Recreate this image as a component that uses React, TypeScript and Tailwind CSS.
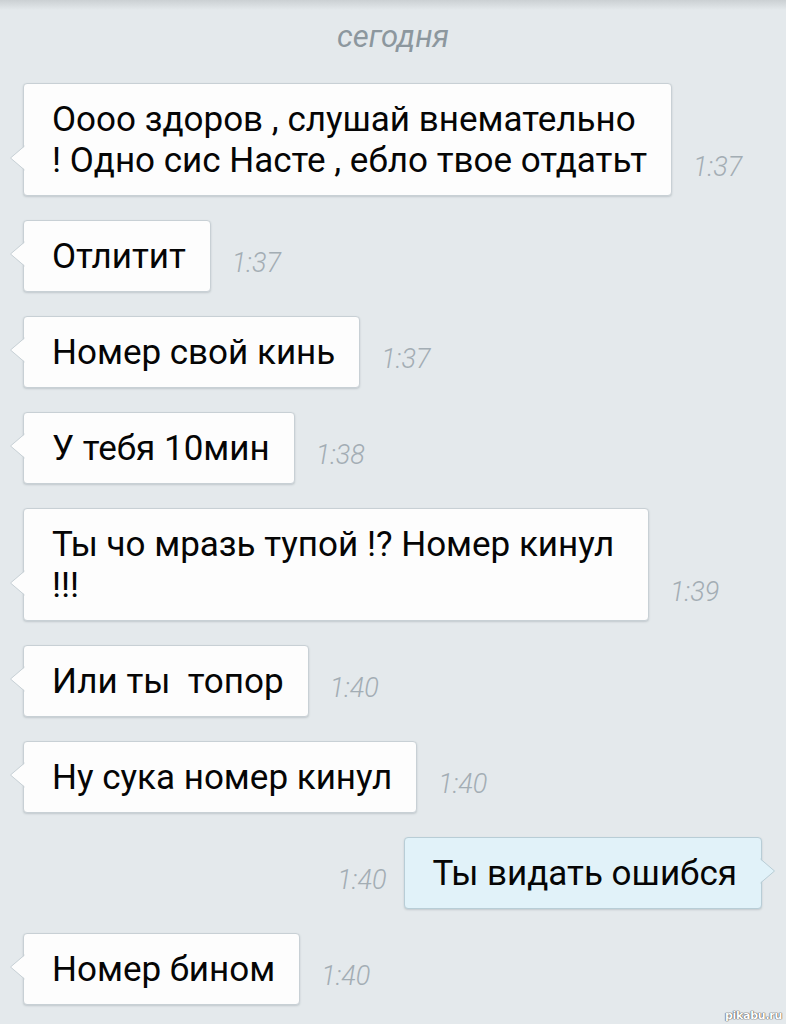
type Message = {
  text: string;
  time: string;
  out?: boolean;
  width?: string;
};

const messages: Message[] = [
  { text: "Оооо здоров , слушай внемательно\n! Одно сис Насте , ебло твое отдатьт", time: "1:37" },
  { text: "Отлитит", time: "1:37" },
  { text: "Номер свой кинь", time: "1:37" },
  { text: "У тебя 10мин", time: "1:38" },
  { text: "Ты чо мразь тупой !? Номер кинул\n!!!", time: "1:39", width: "w-[626px]" },
  { text: "Или ты  топор", time: "1:40" },
  { text: "Ну сука номер кинул", time: "1:40" },
  { text: "Ты видать ошибся", time: "1:40", out: true },
  { text: "Номер бином", time: "1:40" },
];

function Tail({ out }: { out?: boolean }) {
  if (out) {
    return (
      <svg
        className="absolute right-[-15px] bottom-[24px]"
        width="16"
        height="26"
        viewBox="0 0 16 26"
      >
        <polygon points="0,1 14.5,13 0,25" fill="#e1f2f9" />
        <polyline points="0.5,1 14.5,13 0.5,25" fill="none" stroke="#b8cdd6" strokeWidth="1" strokeLinejoin="round" />
      </svg>
    );
  }
  return (
    <svg
      className="absolute left-[-15px] bottom-[24px]"
      width="16"
      height="26"
      viewBox="0 0 16 26"
    >
      <polygon points="16,1 1.5,13 16,25" fill="#fdfdfd" />
      <polyline points="15.5,1 1.5,13 15.5,25" fill="none" stroke="#c8d0d5" strokeWidth="1" strokeLinejoin="round" />
    </svg>
  );
}

function Time({ value }: { value: string }) {
  return (
    <span className="mb-[15px] shrink-0 text-[27px] leading-none font-light italic text-[#a3adb4]">
      {value}
    </span>
  );
}

function Bubble({ msg }: { msg: Message }) {
  return (
    <div
      className={`relative rounded-[4px] border pt-[15px] pb-[14px] pl-[28px] pr-[24px] text-[35px] leading-[41px] whitespace-pre-wrap text-[#050505] shadow-[0_1px_2px_rgba(90,105,115,0.25)] ${
        msg.out ? "border-[#b8cdd6] bg-[#e1f2f9]" : "border-[#c8d0d5] bg-[#fdfdfd]"
      } ${msg.width ?? ""}`}
    >
      {msg.text}
      <Tail out={msg.out} />
    </div>
  );
}

export default function App() {
  return (
    <div className="relative min-h-screen w-full overflow-hidden bg-[#e4e9ec] font-['Roboto','Noto_Sans',sans-serif]">
      <div className="h-[10px] w-full bg-gradient-to-b from-[#cbd0d3] to-[#e4e9ec]" />
      <div className="pt-[8px] text-center text-[31px] leading-[38px] italic text-[#8c979e]">сегодня</div>

      <div className="mt-[27px] flex flex-col gap-[24px]">
        {messages.map((m, i) =>
          m.out ? (
            <div key={i} className="flex items-end justify-end gap-[17px] pr-[24px]">
              <Time value={m.time} />
              <Bubble msg={m} />
            </div>
          ) : (
            <div key={i} className="flex items-end gap-[21px] pl-[23px]">
              <Bubble msg={m} />
              <Time value={m.time} />
            </div>
          )
        )}
      </div>

      <div className="absolute right-[4px] bottom-[3px] text-[11px] leading-none font-bold tracking-tight text-white font-['DejaVu_Sans',sans-serif] [text-shadow:0_0_1px_#555,0_0_1px_#555,0_0_1px_#555]">
        pikabu.ru
      </div>
    </div>
  );
}
